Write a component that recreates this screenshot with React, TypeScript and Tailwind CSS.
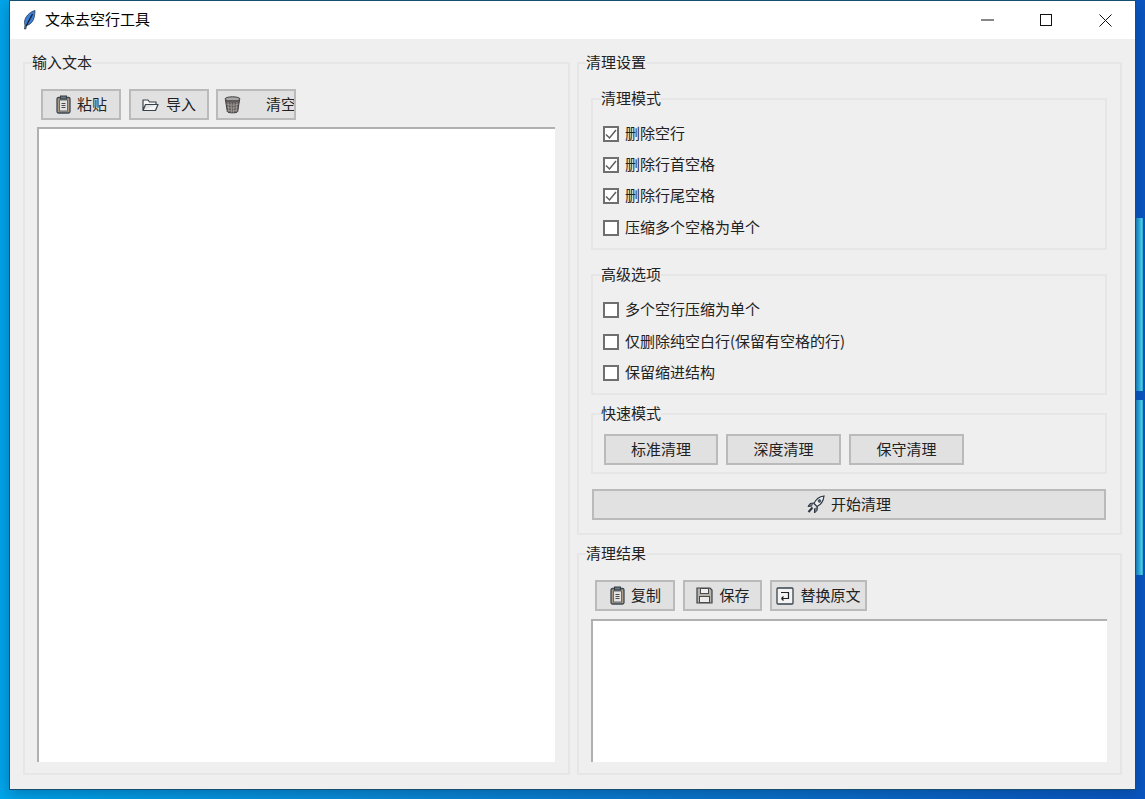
import type { ReactNode } from 'react';

const FONT = "font-['Noto_Sans_CJK_SC','Liberation_Sans',sans-serif]";

// --- little emoji style icons, drawn by hand ---
function Feather() {
  return (
    <svg width="13" height="20" viewBox="0 0 13 20">
      <path d="M12 .5C8 1.500 3.500 5 2 9.500c-.7 2.200-.7 4 0 5.500L1.500 19h1.300l.7-3.500c4-.8 6.500-4 7.500-7.500.6-2.500 1-5 1-7.500z" fill="#3c7fd6" stroke="#2a3f5c" strokeWidth=".8" />
      <path d="M9.500 4 3.200 16" stroke="#0f1c2c" strokeWidth="1.300" fill="none" />
    </svg>
  );
}

function Clipboard() {
  return (
    <svg width="15" height="19" viewBox="0 0 15 19" fill="none">
      <rect x="1" y="2.500" width="13" height="15.500" rx="1.500" fill="#a89a86" stroke="#3d4852" strokeWidth="1.300" />
      <rect x="3.500" y="5" width="8" height="11" fill="#e4e4e4" stroke="#5f6a74" />
      <rect x="4.500" y="1" width="6" height="3" fill="#6d747b" stroke="#333c45" />
      <path d="M5.500 8.500h4M5.500 10.500h4M5.500 12.500h4" stroke="#4a4a4a" />
    </svg>
  );
}

function Folder() {
  return (
    <svg width="17" height="14" viewBox="0 0 17 14" fill="none">
      <path d="M1 12.500V2h5l1.500 2h6.500v2.500M1 12.500h12.500l2.500-6H3.500z" stroke="#38424c" strokeWidth="1.200" fill="#f6f6f6" strokeLinejoin="round" />
    </svg>
  );
}

function Trash() {
  return (
    <svg className="shrink-0" width="17" height="18" viewBox="0 0 17 18" fill="none">
      <ellipse cx="8.500" cy="3" rx="7.500" ry="2.200" fill="#a8a8a8" stroke="#3c3c3c" />
      <path d="M1.500 4l1.800 11.500c.3 1.800 10.100 1.800 10.400 0L15.500 4" fill="#5f5a58" stroke="#3c3c3c" />
      <path d="M4 6l1 10M7 6.500l.5 10M10 6.500l-.5 10M13 6l-1 10M2.500 8c3 1.500 9 1.500 12 0M3 11c3 1.500 8 1.500 11 0M3.500 14c3 1.200 7 1.200 10 0" stroke="#a5a09c" strokeWidth=".8" />
    </svg>
  );
}

function Floppy() {
  return (
    <svg width="17" height="17" viewBox="0 0 17 17" fill="none">
      <path d="M1 1h13l2 2v13H1z" fill="#b9b3aa" stroke="#38424c" strokeWidth="1.200" />
      <rect x="4.500" y="1.500" width="8" height="5" fill="#f0f0f0" stroke="#4a4a4a" />
      <rect x="3.500" y="9.500" width="10" height="6" fill="#ececec" stroke="#4a4a4a" />
    </svg>
  );
}

function ReturnBox() {
  return (
    <svg width="18" height="18" viewBox="0 0 18 18" fill="none">
      <rect x="1" y="1" width="16" height="16" rx="1" stroke="#38424c" strokeWidth="1.300" fill="#f4f4f4" />
      <path d="M5 5.500h7.500v6H5.500M5.500 11.500l2-2M5.500 11.500l2 2" stroke="#222" strokeWidth="1.200" />
    </svg>
  );
}

function Rocket() {
  return (
    <svg width="18" height="19" viewBox="0 0 18 19" fill="none">
      <path d="M17 1c-4.500.5-8 3-10 7.500l3 3c4.500-2 6.500-6 7-10.500z" fill="#efefef" stroke="#2c3640" strokeWidth="1.200" />
      <path d="M7 8 3 8.500 1 11.500l4-.5M10.500 11.500l-.5 4-2.500 2.500v-4.500" fill="#6c7680" stroke="#2c3640" />
      <path d="M5.500 12.500 1.500 17" stroke="#2c3640" strokeWidth="2" />
      <circle cx="12.500" cy="6" r="1.400" fill="#3f5f80" stroke="#2c3640" strokeWidth=".6" />
    </svg>
  );
}

function Group({ title, className, inner, children }: { title: string; className: string; inner?: boolean; children: ReactNode }) {
  return (
    <fieldset className={`border-2 border-[#e6e6e6] min-w-0 ${className}`}>
      <legend className={`h-4 text-[15px] leading-[14px] ${inner ? 'ml-[8px]' : 'ml-[7px]'}`}>{title}</legend>
      {children}
    </fieldset>
  );
}

function ToolButton({ icon, label, className }: { icon: ReactNode; label: string; className: string }) {
  return (
    <button className={`h-[31px] shrink-0 flex items-center overflow-hidden whitespace-nowrap border-2 border-[#bababa] bg-[#e1e1e1] text-[15px] text-[#222] ${className}`}>
      {icon}
      <span className="shrink-0">{label}</span>
    </button>
  );
}

function Check({ label, checked, className }: { label: string; checked?: boolean; className?: string }) {
  return (
    <label className={`h-[31px] flex items-center gap-[6px] pl-[10px] text-[15px] text-[#222] ${className ?? ''}`}>
      <span className="w-4 h-4 flex items-center justify-center border-2 border-[#6f6f6f] bg-white">
        {checked && (
          <svg width="12" height="12" viewBox="0 0 12 12" fill="none">
            <path d="M1 6.500 4.500 10 11 2" stroke="#5e5e5e" strokeWidth="1.500" />
          </svg>
        )}
      </span>
      {label}
    </label>
  );
}

function TextBox({ className }: { className: string }) {
  return <div className={`bg-white border-t-2 border-l-2 border-[#b0b0b0] ${className}`} />;
}

export default function App() {
  return (
    <div className={`flex w-[1145px] h-[799px] overflow-hidden bg-[linear-gradient(90deg,#00a6ea_0%,#0a8ad6_35%,#0a6fc8_70%,#0a56c2_100%)] ${FONT}`}>
      <div className="w-[9px] shrink-0" />

      {/* window */}
      <div className="w-[1127px] h-[790px] shrink-0 flex flex-col border border-[#17506f] bg-[#efefef] text-[#222] shadow-[0_4px_14px_rgba(0,40,90,0.35)]">
        <div className="h-[38px] shrink-0 bg-white flex items-center pl-[13px] pr-px">
          <Feather />
          <span className="ml-[9px] pb-[2px] text-[15px] text-black">文本去空行工具</span>
          <div className="ml-auto flex h-full">
            <div className="w-[56px] flex items-center justify-center">
              <svg width="14" height="2" viewBox="0 0 14 2"><path d="M0 1h13" stroke="#111" /></svg>
            </div>
            <div className="w-[60px] flex items-center justify-center">
              <svg width="12" height="12" viewBox="0 0 12 12"><rect x=".5" y=".5" width="11" height="11" fill="none" stroke="#111" /></svg>
            </div>
            <div className="w-[58px] flex items-center justify-center">
              <svg width="13" height="13" viewBox="0 0 13 13"><path d="M.5.500l12 12M12.500.500l-12 12" stroke="#111" /></svg>
            </div>
          </div>
        </div>

        <div className="flex-1 flex gap-[7px] pt-4 pl-[13px] pr-[13px] pb-[14px]">
          {/* left column */}
          <Group title="输入文本" className="w-[547px] flex flex-col">
            <div className="flex-1 flex flex-col pt-[18px] pl-3 pr-[13px] pb-[11px]">
              <div className="flex gap-2 pl-1">
                <ToolButton icon={<Clipboard />} label="粘贴" className="w-20 justify-center gap-[6px] pl-px" />
                <ToolButton icon={<Folder />} label="导入" className="w-20 justify-center gap-[7px]" />
                <ToolButton icon={<Trash />} label="清空" className="w-20 gap-[25px] pl-[6px] -ml-px" />
              </div>
              <TextBox className="flex-1 mt-[7px]" />
            </div>
          </Group>

          {/* right column */}
          <div className="w-[545px] flex flex-col gap-[11px]">
            <Group title="清理设置" className="h-[480px] shrink-0">
              <div className="pt-5 pl-3 pr-[13px] flex flex-col">
                <Group title="清理模式" inner className="h-[159px]">
                  <div className="pt-[11px]">
                    <Check label="删除空行" checked />
                    <Check label="删除行首空格" checked />
                    <Check label="删除行尾空格" checked />
                    <Check label="压缩多个空格为单个" className="mt-px" />
                  </div>
                </Group>
                <Group title="高级选项" inner className="h-[128px] mt-[17px]">
                  <div className="pt-[11px]">
                    <Check label="多个空行压缩为单个" />
                    <Check label="仅删除纯空白行(保留有空格的行)" className="mt-px" />
                    <Check label="保留缩进结构" />
                  </div>
                </Group>
                <Group title="快速模式" inner className="h-[68px] mt-[11px]">
                  <div className="flex gap-2 pt-3 pl-[11px]">
                    <ToolButton icon={null} label="标准清理" className="w-[114px] justify-center" />
                    <ToolButton icon={null} label="深度清理" className="w-[115px] justify-center" />
                    <ToolButton icon={null} label="保守清理" className="w-[115px] justify-center" />
                  </div>
                </Group>
                <button className="mt-[15px] ml-px w-[514px] h-[31px] flex items-center justify-center gap-[6px] border-2 border-[#bababa] bg-[#e1e1e1] text-[15px] text-[#222]">
                  <Rocket />
                  开始清理
                </button>
              </div>
            </Group>

            <Group title="清理结果" className="flex-1 flex flex-col">
              <div className="flex-1 flex flex-col pt-[18px] pl-3 pr-[13px] pb-[11px]">
                <div className="flex gap-2 pl-[4px]">
                  <ToolButton icon={<Clipboard />} label="复制" className="w-20 justify-center gap-[6px] pl-px" />
                  <ToolButton icon={<Floppy />} label="保存" className="w-[79px] justify-center gap-[6px] pl-px" />
                  <ToolButton icon={<ReturnBox />} label="替换原文" className="w-[97px] justify-center gap-[6px]" />
                </div>
                <TextBox className="flex-1 mt-[8px]" />
              </div>
            </Group>
          </div>
        </div>
      </div>

      {/* edge of another window on the desktop */}
      <div className="flex-1 flex flex-col gap-[9px] pt-[218px]">
        <div className="w-[7px] h-[173px] bg-[linear-gradient(90deg,#1877b8,#2aa0cc_40%,#46d2e2_85%,#2a90d0)]" />
        <div className="w-[7px] h-[175px] bg-[linear-gradient(90deg,#1877b8,#2aa0cc_40%,#46d2e2_85%,#2a90d0)]" />
      </div>
    </div>
  );
}
